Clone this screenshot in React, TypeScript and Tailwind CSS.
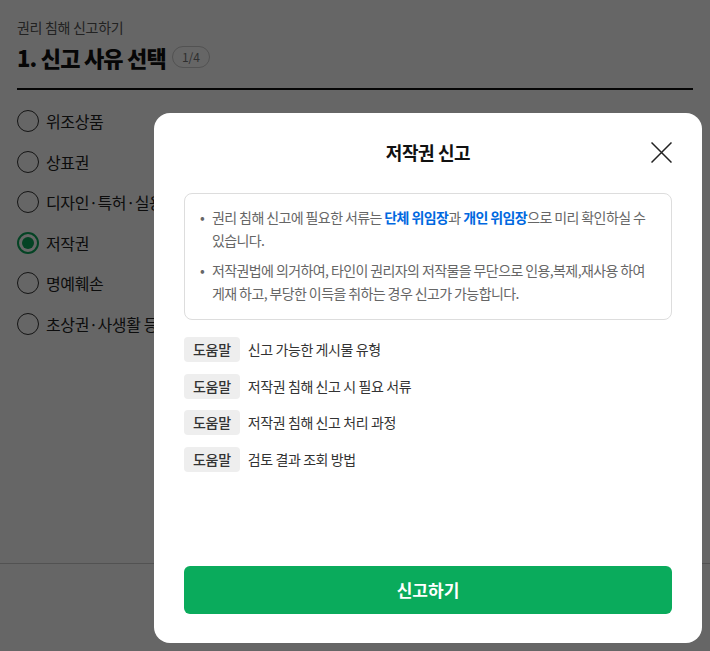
const reasons = [
  "위조상품",
  "상표권",
  "디자인·특허·실용신안권",
  "저작권",
  "명예훼손",
  "초상권·사생활 등",
];

const helps = [
  "신고 가능한 게시물 유형",
  "저작권 침해 신고 시 필요 서류",
  "저작권 침해 신고 처리 과정",
  "검토 결과 조회 방법",
];

function Radio({ checked }: { checked?: boolean }) {
  return (
    <span
      className={
        checked
          ? "flex h-[22px] w-[22px] items-center justify-center rounded-full border-2 border-[#0aa85a]"
          : "flex h-[22px] w-[22px] items-center justify-center rounded-full border-[1.5px] border-[#333]"
      }
    >
      {checked && <span className="h-[12px] w-[12px] rounded-full bg-[#0aa85a]"></span>}
    </span>
  );
}

function CloseIcon() {
  return (
    <svg width="21" height="21" viewBox="0 0 21 21" fill="none" stroke="#222" strokeWidth="1.5">
      <path d="M0.5 0.5 L20.5 20.5 M20.5 0.5 L0.5 20.5" />
    </svg>
  );
}

export default function App() {
  return (
    <div
      className="relative h-[651px] w-[710px] overflow-hidden bg-white text-[#111]"
      style={{ fontFamily: '"Noto Sans CJK KR", "Noto Sans", sans-serif' }}
    >
      <div className="px-[17px] pt-[16px]">
        <p className="text-[14px] leading-[22px] tracking-[-0.3px] text-[#555]">권리 침해 신고하기</p>
        <div className="mt-[4px] flex items-center gap-[6px]">
          <h1 className="text-[22px] font-extrabold leading-[30px] tracking-[-0.8px]">1. 신고 사유 선택</h1>
          <span className="rounded-full border border-[#ccc] px-[9px] text-[12px] leading-[20px] text-[#777]">
            1/4
          </span>
        </div>
        <div className="mt-[16px] h-[2px] w-full bg-[#111]"></div>
        <ul className="mt-[11px] flex flex-col">
          {reasons.map((r, i) => (
            <li key={r} className="flex h-[40.5px] items-center gap-[7px]">
              <Radio checked={i === 3} />
              <span className="text-[16px] tracking-[-0.4px] text-[#222]">{r}</span>
            </li>
          ))}
        </ul>
      </div>

      <div className="absolute left-0 right-0 top-[563px] h-[88px] border-t border-[#ccc] bg-white"></div>

      {/* dimmed overlay */}
      <div className="absolute inset-0 bg-black/60"></div>

      <div className="absolute left-[154px] top-[113px] flex h-[530px] w-[548px] flex-col rounded-[16px] bg-white px-[30px] pb-[29px]">
        <div className="relative flex h-[78px] items-center justify-center">
          <h2 className="text-[18px] font-bold tracking-[-0.4px] text-[#111]">저작권 신고</h2>
          <span className="absolute right-0 top-[29px]">
            <CloseIcon />
          </span>
        </div>

        <div className="mt-[2px] rounded-[8px] border border-[#ddd] pb-[15px] pl-[15px] pr-[12px] pt-[12px]">
          <ul className="flex flex-col gap-[8px] text-[14px] leading-[22.5px] tracking-[-0.6px] text-[#666]">
            <li className="flex gap-[6px]">
              <span className="w-[6px] shrink-0">•</span>
              <p>
                권리 침해 신고에 필요한 서류는 <b className="font-bold text-[#0068e0]">단체 위임장</b>과{" "}
                <b className="font-bold text-[#0068e0]">개인 위임장</b>으로 미리 확인하실 수 있습니다.
              </p>
            </li>
            <li className="flex gap-[6px]">
              <span className="w-[6px] shrink-0">•</span>
              <p>
                저작권법에 의거하여, 타인이 권리자의 저작물을 무단으로 인용,복제,재사용 하여 게재 하고, 부당한 이득을
                취하는 경우 신고가 가능합니다.
              </p>
            </li>
          </ul>
        </div>

        <ul className="mt-[17px] flex flex-col gap-[11.5px]">
          {helps.map((h) => (
            <li key={h} className="flex items-center gap-[8px]">
              <span className="rounded-[4px] bg-[#eee] px-[9px] text-[14px] font-medium leading-[25px] tracking-[-0.3px] text-[#333]">
                도움말
              </span>
              <span className="text-[14px] tracking-[-0.4px] text-[#333]">{h}</span>
            </li>
          ))}
        </ul>

        <button className="mt-auto h-[48px] w-full rounded-[6px] bg-[#0aab5c] text-[17px] font-bold text-white">
          신고하기
        </button>
      </div>
    </div>
  );
}
